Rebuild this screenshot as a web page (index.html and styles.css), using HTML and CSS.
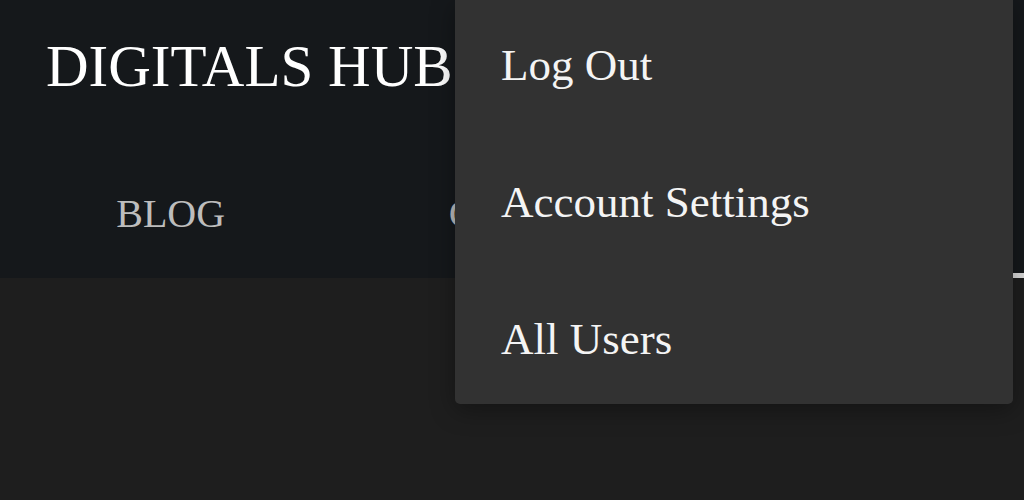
FILE: index.html
```html
<!DOCTYPE html>
<html lang="en">
<head>
    <meta charset="UTF-8">
    <meta name="viewport" content="width=device-width, initial-scale=1.0">
    <title>Digitals Hub</title>
    <link rel="stylesheet" href="styles.css">
</head>
<body>
    <header class="site-header">
        <div class="brand">DIGITALS HUB</div>
        <nav class="main-nav">
            <a href="#" class="nav-link">BLOG</a>
            <a href="#" class="nav-link">CHATS</a>
            <a href="#" class="nav-link nav-active">ACCOUNT</a>
        </nav>
    </header>

    <div class="account-menu">
        <a href="#" class="menu-item">Log Out</a>
        <a href="#" class="menu-item">Account Settings</a>
        <a href="#" class="menu-item">All Users</a>
    </div>
</body>
</html>
```
FILE: styles.css
```css
body {
    margin: 0;
    min-height: 100vh;
    background-color: #1e1e1e;
    font-family: "Liberation Serif", "Times New Roman", serif;
}


.site-header {
    display: flex;
    flex-direction: column;
    height: 278px;
    background-color: #15181b;
}
.brand {
    height: 132px;
    padding: 32px 0 0 46px;
    font-size: 59px;
    color: #ffffff;
}
.main-nav {
    display: grid;
    grid-template-columns: repeat(3, 1fr);
}
.nav-link {
    display: block;
    text-align: center;
    text-decoration: none;
    font-size: 40px;
    line-height: 46px;
    padding: 27px 0 36px;
    color: #bdbdbd;
    border-bottom: 5px solid transparent;
}
.nav-active {
    border-bottom-color: #dcdcdc;
}


.account-menu {
    position: absolute;
    top: 0;
    left: 455px;
    width: 558px;
    display: flex;
    flex-direction: column;
    background-color: #323232;
    border-radius: 0 0 5px 5px;
    box-shadow: 0 6px 24px rgba(0, 0, 0, 0.35);
}
.menu-item {
    display: block;
    padding: 40px 46px 47px;
    font-size: 45px;
    line-height: 50px;
    color: #f4f4f4;
    text-decoration: none;
}
.menu-item:last-child {
    padding-bottom: 40px;
}
```
